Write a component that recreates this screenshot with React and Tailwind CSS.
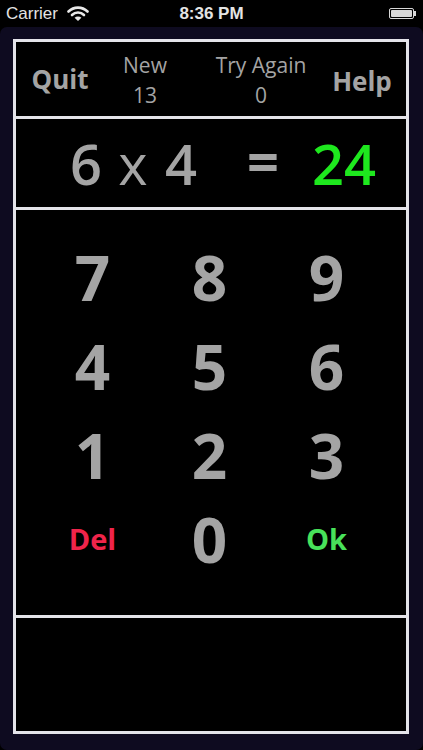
import React from 'react';

const FONT = { fontFamily: '"Comic Sans MS", "Open Sans", "DejaVu Sans", sans-serif' };

const Wifi = () => (
  <svg width="22" height="16" viewBox="0 0 22 16" className="ml-[9px]">
    <path d="M1.5 5.5 A13.5 13.5 0 0 1 20.5 5.5" stroke="#e8e8e8" strokeWidth="2.6" fill="none" strokeLinecap="round" />
    <path d="M5 9 A8.5 8.5 0 0 1 17 9" stroke="#e8e8e8" strokeWidth="2.6" fill="none" strokeLinecap="round" />
    <path d="M11 15 L7.6 11.8 A4.8 4.8 0 0 1 14.4 11.8 Z" fill="#e8e8e8" />
  </svg>
);

const Battery = () => (
  <div className="flex items-center">
    <div className="w-[25px] h-[11px] border border-[#d8d8d8] rounded-[2px] p-[1px]">
      <div className="w-full h-full bg-[#d8d8d8] rounded-[1px]" />
    </div>
    <div className="w-[2px] h-[5px] bg-[#d8d8d8]" />
  </div>
);

const keys = [
  ['7', '8', '9'],
  ['4', '5', '6'],
  ['1', '2', '3'],
];

export default function App() {
  return (
    <div className="w-[423px] h-[750px] bg-black flex flex-col overflow-hidden">
      {/* Status bar */}
      <div className="h-[27px] flex items-center justify-between px-[6px] text-[#e4e4e4]" style={{ fontFamily: '"Liberation Sans", Arial, sans-serif' }}>
        <div className="flex items-center w-[120px]">
          <span className="text-[17px] leading-none">Carrier</span>
          <Wifi />
        </div>
        <span className="text-[17px] leading-none font-bold">8:36 PM</span>
        <div className="w-[120px] flex justify-end pr-[1px]">
          <Battery />
        </div>
      </div>

      {/* Main */}
      <div className="flex-1 bg-[#0e0b20] rounded-[7px] pl-[13px] pr-[14px] pt-[12px] pb-[16px]" style={FONT}>
        <div className="h-full border-[3px] border-[#e4e4ea] bg-black flex flex-col">
          {/* Header */}
          <div className="h-[77px] border-b-[3px] border-[#e4e4ea] flex items-center text-[#a4a4a4]">
            <div className="w-[88px] text-center text-[26px] font-bold leading-none">Quit</div>
            <div className="w-[82px] text-center text-[21px] leading-none flex flex-col items-center mt-[3px]">
              <span>New</span>
              <span className="mt-[9px]">13</span>
            </div>
            <div className="w-[150px] text-center text-[21px] leading-none flex flex-col items-center mt-[3px]">
              <span>Try Again</span>
              <span className="mt-[9px]">0</span>
            </div>
            <div className="w-[52px] flex justify-center text-[26px] font-bold leading-none mt-[4px]">Help</div>
          </div>

          {/* Equation */}
          <div className="h-[91px] border-b-[3px] border-[#e4e4ea] flex items-center text-[56px] font-semibold leading-none">
            <div className="w-[47px]" />
            <div className="w-[46px] text-center text-[#a4a4a4]">6</div>
            <div className="w-[48px] text-center text-[#a4a4a4] font-normal">x</div>
            <div className="w-[48px] text-center text-[#a4a4a4]">4</div>
            <div className="w-[34px]" />
            <div className="w-[48px] text-center text-[#a4a4a4] font-bold -mt-[6px]">=</div>
            <div className="w-[17px]" />
            <div className="w-[80px] text-center text-[#1ee81e]">24</div>
          </div>

          {/* Keypad */}
          <div className="h-[408px] border-b-[3px] border-[#e4e4ea] pt-[22px] pl-[18px] text-[#a4a4a4]">
            {keys.map((row, i) => (
              <div key={i} className="h-[89px] flex items-center">
                {row.map((k) => (
                  <div key={k} className="w-[117px] text-center text-[62px] font-bold leading-none">{k}</div>
                ))}
              </div>
            ))}
            <div className="h-[79px] flex items-center">
              <div className="w-[117px] text-center text-[29px] font-bold leading-none text-[#f0244a]">Del</div>
              <div className="w-[117px] text-center text-[62px] font-bold leading-none">0</div>
              <div className="w-[117px] text-center text-[29px] font-bold leading-none text-[#48e25a]">Ok</div>
            </div>
          </div>

          {/* Bottom panel */}
          <div className="flex-1" />
        </div>
      </div>
    </div>
  );
}
